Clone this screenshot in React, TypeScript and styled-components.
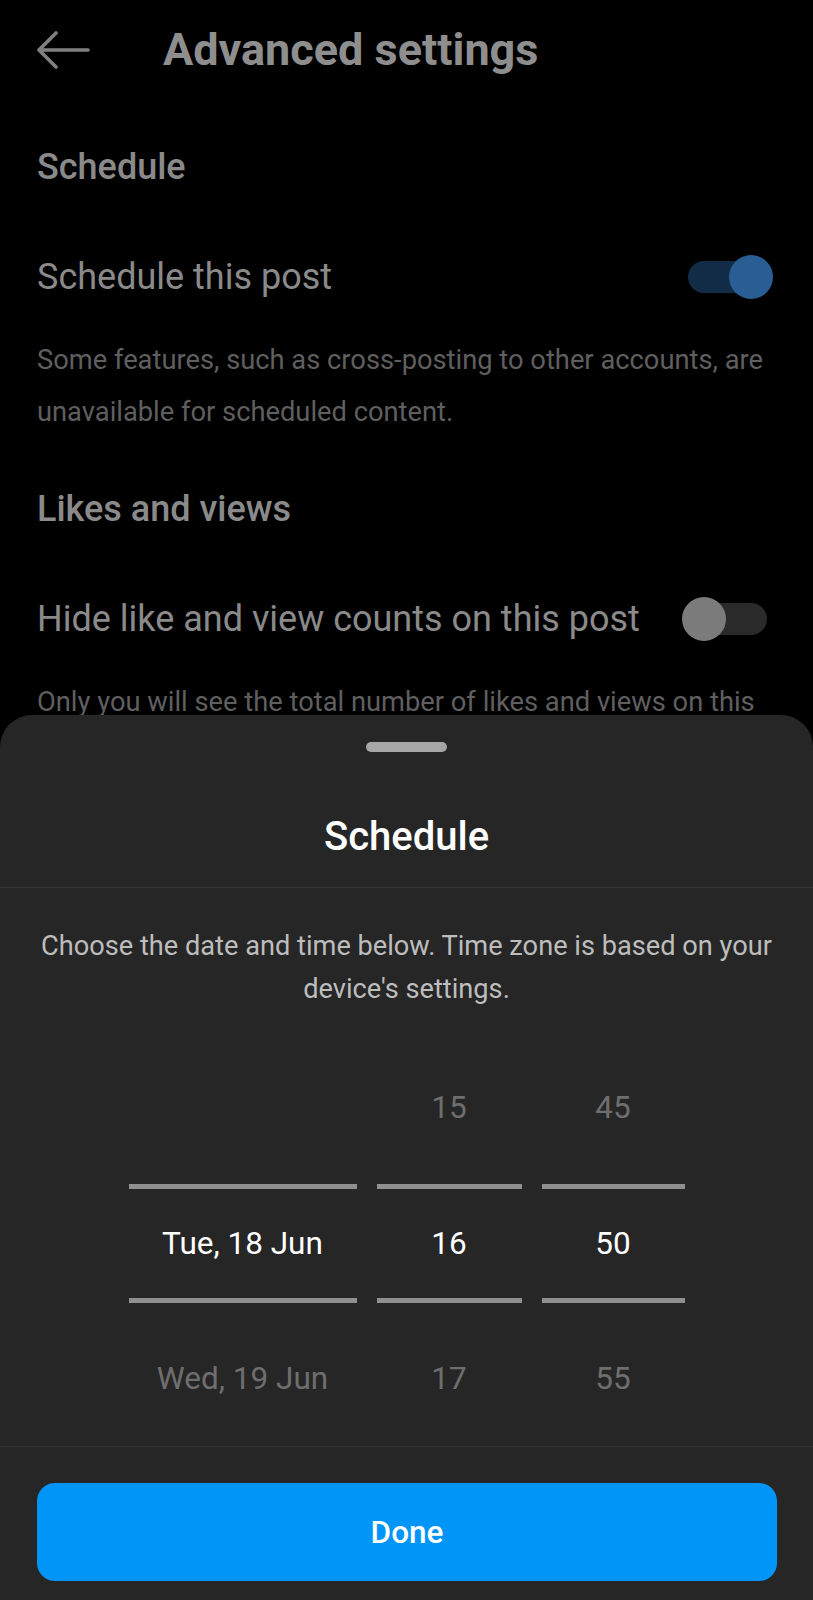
import React from "react";
import styled, { createGlobalStyle } from "styled-components";

const Global = createGlobalStyle`
  html, body { margin: 0; padding: 0; background: #000; }
  body { font-family: Roboto, "Noto Sans", "Liberation Sans", sans-serif; -webkit-font-smoothing: antialiased; }
  * { box-sizing: border-box; }
`;

const Screen = styled.div`
  position: relative;
  width: 813px;
  height: 1600px;
  overflow: hidden;
  background: #000;
`;

const Header = styled.header`
  display: flex;
  align-items: center;
  height: 100px;
  padding-left: 37px;
`;

const BackButton = styled.button`
  display: flex;
  align-items: center;
  justify-content: center;
  width: 54px;
  height: 54px;
  padding: 0;
  margin-right: 72px;
  border: none;
  background: transparent;
`;

const Title = styled.h1`
  margin: 0;
  font-size: 45px;
  line-height: 52px;
  font-weight: 700;
  color: #8e8e8e;
`;

const Content = styled.main`
  display: flex;
  flex-direction: column;
  padding: 0 40px 0 37px;
`;

const SectionTitle = styled.h2<{ $gap?: number }>`
  margin: ${(p) => p.$gap ?? 47}px 0 0;
  font-size: 36px;
  line-height: 40px;
  font-weight: 500;
  color: #8a8a8a;
`;

const Row = styled.div`
  display: flex;
  align-items: center;
  justify-content: space-between;
  height: 60px;
  margin-top: 60px;
`;

const RowLabel = styled.span`
  font-size: 36px;
  color: #8a8a8a;
  white-space: nowrap;
`;

const Note = styled.p`
  margin: 27px 0 0;
  font-size: 27.3px;
  line-height: 52px;
  color: #5f5f5f;
`;

const Toggle = styled.div<{ $on: boolean }>`
  position: relative;
  flex: none;
  width: 80px;
  height: 32px;
  border-radius: 16px;
  margin-right: ${(p) => (p.$on ? "5px" : "6px")};
  background: ${(p) => (p.$on ? "#122c47" : "#2a2a2a")};
`;

const Knob = styled.span<{ $on: boolean }>`
  position: absolute;
  top: -6px;
  ${(p) => (p.$on ? "right: -5px;" : "left: -5px;")}
  width: 44px;
  height: 44px;
  border-radius: 50%;
  background: ${(p) => (p.$on ? "#2a5d93" : "#7b7b7b")};
`;

const Sheet = styled.section`
  position: absolute;
  left: 0;
  right: 0;
  bottom: 0;
  height: 885px;
  display: flex;
  flex-direction: column;
  background: #262626;
  border-radius: 32px 32px 0 0;
`;

const Handle = styled.div`
  align-self: center;
  width: 81px;
  height: 10px;
  margin-top: 27px;
  border-radius: 5px;
  background: #a6a6a6;
`;

const SheetTitle = styled.h2`
  margin: 63px 0 0;
  padding-bottom: 28px;
  border-bottom: 1px solid #363636;
  text-align: center;
  font-size: 40px;
  line-height: 44px;
  font-weight: 500;
  color: #fff;
`;

const SheetNote = styled.p`
  margin: 0;
  padding: 37px 28px 0;
  text-align: center;
  font-size: 27.2px;
  line-height: 43px;
  color: #bdbdbd;
`;

const Picker = styled.div`
  display: grid;
  grid-template-columns: 228px 145px 143px;
  column-gap: 20px;
  justify-content: center;
  margin-top: 28px;
  border-bottom: 1px solid #363636;
`;

const Column = styled.div`
  display: flex;
  flex-direction: column;
`;

const Cell = styled.div<{ $selected?: boolean }>`
  display: flex;
  align-items: center;
  justify-content: center;
  height: ${(p) => (p.$selected ? "119px" : "136px")};
  ${(p) =>
    p.$selected
      ? "margin: 9px 0 7px; border-top: 5px solid #8f8f8f; border-bottom: 5px solid #8f8f8f;"
      : ""}
  font-size: 31.5px;
  white-space: nowrap;
  color: ${(p) => (p.$selected ? "#ffffff" : "#6e6e6e")};
`;

const Footer = styled.div`
  padding: 36px 36px 18px 37px;
`;

const DoneButton = styled.button`
  width: 100%;
  height: 98px;
  border: none;
  border-radius: 18px;
  background: #0095f6;
  color: #fff;
  font-family: Roboto, "Noto Sans", sans-serif;
  font-size: 31.5px;
  font-weight: 500;
`;

const columns = [
  ["", "Tue, 18 Jun", "Wed, 19 Jun"],
  ["15", "16", "17"],
  ["45", "50", "55"],
];

export default function App() {
  return (
    <Screen>
      <Global />
      <Header>
        <BackButton aria-label="Back">
          <svg width="54" height="40" viewBox="0 0 54 40" fill="none">
            <path
              d="M2 20 H51 M19 3 L2 20 L19 37"
              stroke="#808080"
              strokeWidth="3.6"
              strokeLinecap="round"
              strokeLinejoin="round"
            />
          </svg>
        </BackButton>
        <Title>Advanced settings</Title>
      </Header>
      <Content>
        <SectionTitle>Schedule</SectionTitle>
        <Row>
          <RowLabel>Schedule this post</RowLabel>
          <Toggle $on>
            <Knob $on />
          </Toggle>
        </Row>
        <Note>
          Some features, such as cross-posting to other accounts, are unavailable for scheduled content.
        </Note>
        <SectionTitle $gap={51}>Likes and views</SectionTitle>
        <Row>
          <RowLabel>Hide like and view counts on this post</RowLabel>
          <Toggle $on={false}>
            <Knob $on={false} />
          </Toggle>
        </Row>
        <Note>
          Only you will see the total number of likes and views on this post. You can change this later.
        </Note>
      </Content>
      <Sheet>
        <Handle />
        <SheetTitle>Schedule</SheetTitle>
        <SheetNote>
          Choose the date and time below. Time zone is based on your device's settings.
        </SheetNote>
        <Picker>
          {columns.map((col, i) => (
            <Column key={i}>
              {col.map((v, j) => (
                <Cell key={j} $selected={j === 1}>
                  {v}
                </Cell>
              ))}
            </Column>
          ))}
        </Picker>
        <Footer>
          <DoneButton>Done</DoneButton>
        </Footer>
      </Sheet>
    </Screen>
  );
}
